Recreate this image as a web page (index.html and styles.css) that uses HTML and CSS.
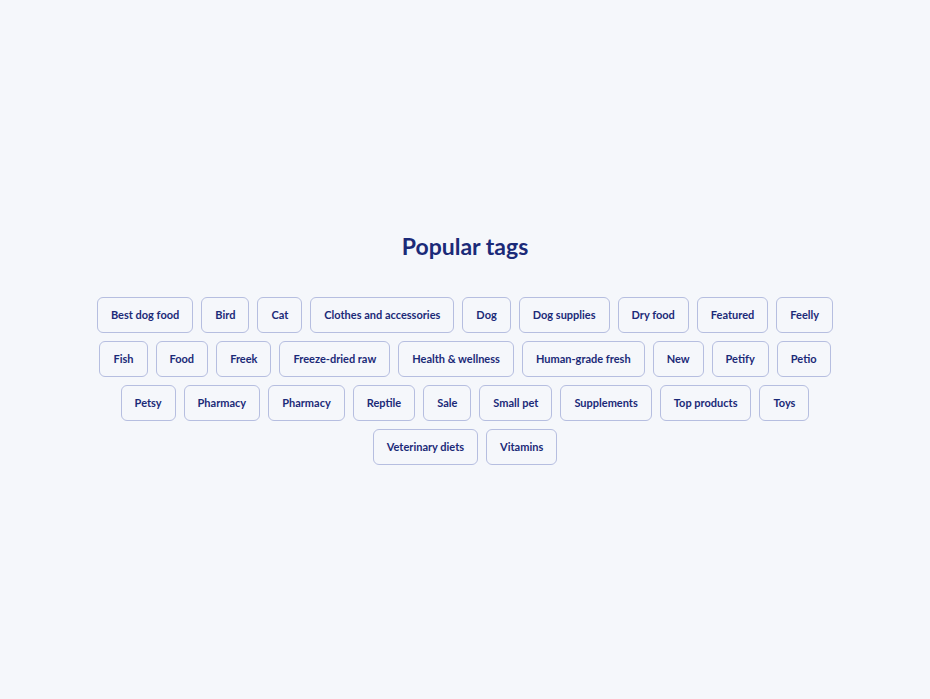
FILE: index.html
```html
<!DOCTYPE html>
<html lang="en">
<head>
    <meta charset="UTF-8" />
    <title>Popular tags</title>
    <link rel="stylesheet" href="styles.css">
</head>
<body>
    <section class="tags-section">
        <h2 class="tags-title">Popular tags</h2>
        <div class="tags-list">
            <a class="tag" href="#">Best dog food</a>
            <a class="tag" href="#">Bird</a>
            <a class="tag" href="#">Cat</a>
            <a class="tag" href="#">Clothes and accessories</a>
            <a class="tag" href="#">Dog</a>
            <a class="tag" href="#">Dog supplies</a>
            <a class="tag" href="#">Dry food</a>
            <a class="tag" href="#">Featured</a>
            <a class="tag" href="#">Feelly</a>
            <a class="tag" href="#">Fish</a>
            <a class="tag" href="#">Food</a>
            <a class="tag" href="#">Freek</a>
            <a class="tag" href="#">Freeze-dried raw</a>
            <a class="tag" href="#">Health &amp; wellness</a>
            <a class="tag" href="#">Human-grade fresh</a>
            <a class="tag" href="#">New</a>
            <a class="tag" href="#">Petify</a>
            <a class="tag" href="#">Petio</a>
            <a class="tag" href="#">Petsy</a>
            <a class="tag" href="#">Pharmacy</a>
            <a class="tag" href="#">Pharmacy</a>
            <a class="tag" href="#">Reptile</a>
            <a class="tag" href="#">Sale</a>
            <a class="tag" href="#">Small pet</a>
            <a class="tag" href="#">Supplements</a>
            <a class="tag" href="#">Top products</a>
            <a class="tag" href="#">Toys</a>
            <a class="tag" href="#">Veterinary diets</a>
            <a class="tag" href="#">Vitamins</a>
        </div>
    </section>
</body>
</html>
```

FILE: styles.css
```css
*,
*:before,
*:after{
    padding: 0;
    margin: 0;
    box-sizing: border-box;
}
body{
    background-color: #f5f7fb;
    font-family: "Lato", "Noto Sans", sans-serif;
    color: #1b2a78;
}
.tags-section{
    width: 760px;
    margin: 0 auto;
    padding-top: 229px;
}
.tags-title{
    text-align: center;
    font-size: 23px;
    font-weight: 700;
    line-height: 34px;
    margin-bottom: 34px;
}
.tags-list{
    display: flex;
    flex-wrap: wrap;
    justify-content: center;
    gap: 8px 8px;
}
.tag{
    display: block;
    height: 36px;
    line-height: 33px;
    padding: 0 13px;
    border: 1.5px solid #b6bee0;
    border-radius: 6px;
    font-size: 11px;
    font-weight: 700;
    color: #1b2a78;
    text-decoration: none;
}
```
